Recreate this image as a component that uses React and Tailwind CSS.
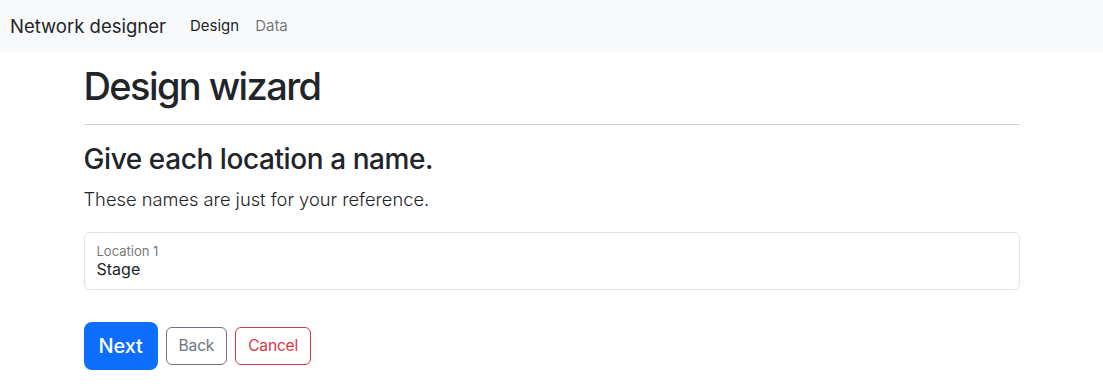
import { useState } from "react";

export default function App() {
    const [locationName, setLocationName] = useState("Stage");

    return (
        <div className="min-h-screen bg-white text-[#212529] font-['Inter','Noto_Sans',sans-serif]">
            {/* Navbar */}
            <nav className="h-[53px] bg-[#f8f9fa] flex items-center px-[10px]">
                <span className="text-[18.5px] mr-4">Network designer</span>
                <div className="flex text-[15px]">
                    <a className="px-2 text-black/90">Design</a>
                    <a className="px-2 text-black/55">Data</a>
                </div>
            </nav>

            {/* Wizard */}
            <main className="max-w-[960px] mx-auto px-3">
                <h1 className="mt-[11px] text-[38px] leading-[1.2] font-medium tracking-[-0.042em]">Design wizard</h1>
                <hr className="mt-[14px] border-t border-[#cfd0d1]" />

                <h2 className="mt-[18px] text-[28px] leading-[1.2] font-medium tracking-[-0.015em]">Give each location a name.</h2>
                <p className="mt-[10px] text-[18.3px] leading-[1.5] font-light">These names are just for your reference.</p>

                {/* Location fields */}
                <div className="mt-[18px] relative h-[58px] border border-[#dee2e6] rounded-md">
                    <label className="absolute left-3 top-[9px] text-[13px] text-[#212529]/65">Location 1</label>
                    <input
                        type="text"
                        value={locationName}
                        onChange={(e) => setLocationName(e.target.value)}
                        className="w-full h-full pt-[25px] pb-[8px] px-3 text-[16px] bg-transparent focus:outline-none"
                    />
                </div>

                {/* Buttons */}
                <div className="flex items-center gap-2 mt-[32px] tracking-[-0.01em]">
                    <button className="h-[48px] px-[15px] rounded-lg bg-[#0d6efd] text-white text-[20px] font-medium">Next</button>
                    <button className="h-[38px] px-3 rounded-md border border-[#6c757d] text-[#6c757d] text-[15.5px]">Back</button>
                    <button className="h-[38px] px-3 rounded-md border border-[#dc3545] text-[#dc3545] text-[15.5px]">Cancel</button>
                </div>
            </main>
        </div>
    );
}
